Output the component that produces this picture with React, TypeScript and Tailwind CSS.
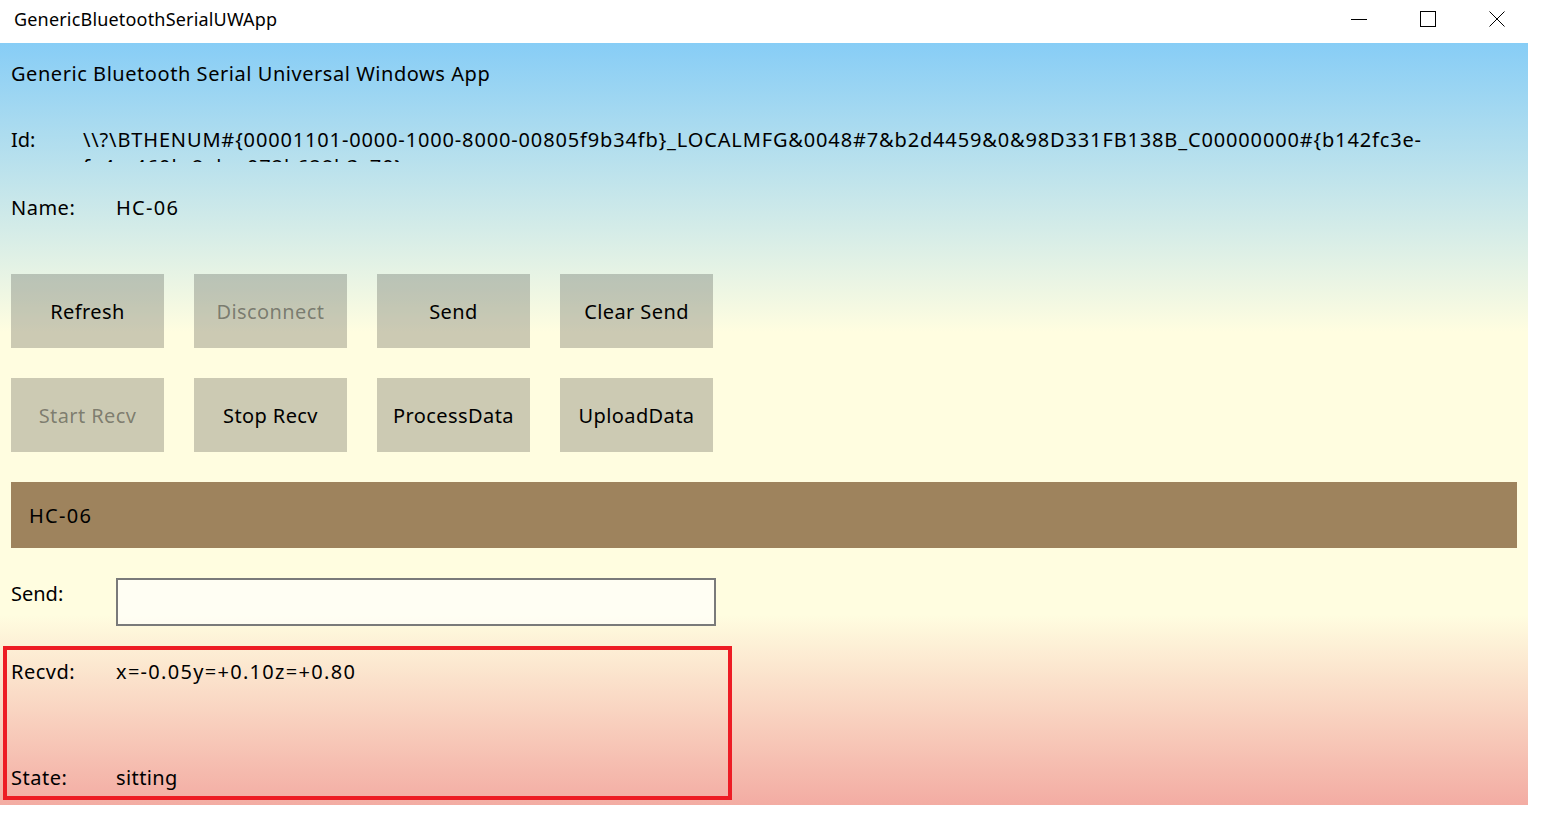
import React from "react";

const font = { fontFamily: '"Noto Sans", "Open Sans", sans-serif' };

function Btn({ label, disabled }: { label: string; disabled?: boolean }) {
  return (
    <div
      className={
        "w-[153px] h-[74px] bg-black/20 flex items-center justify-center text-[20px] tracking-[0.4px] " +
        (disabled ? "text-black/40" : "text-black")
      }
    >
      {label}
    </div>
  );
}

export default function App() {
  const id =
    "\\\\?\\BTHENUM#{00001101-0000-1000-8000-00805f9b34fb}_LOCALMFG&0048#7&b2d4459&0&98D331FB138B_C00000000#{b142fc3e-fa4e-460b-8abc-072b628b3c70}";

  return (
    <div className="w-[1541px] h-[824px] bg-white text-black" style={font}>
      {/* title bar */}
      <div className="h-[43px] w-[1541px] flex justify-between">
        <div className="pl-[14px] pt-[8px] text-[18px] leading-[22px] tracking-[0.18px]">GenericBluetoothSerialUWApp</div>
        <div className="flex items-start pt-[11px] mr-[10px]">
          <div className="w-[69px] flex justify-center">
            <svg width="16" height="16" viewBox="0 0 16 16">
              <path d="M0 8.5H16" stroke="#000" strokeWidth="1" />
            </svg>
          </div>
          <div className="w-[69px] flex justify-center">
            <svg width="16" height="16" viewBox="0 0 16 16">
              <rect x="0.5" y="0.5" width="15" height="15" fill="none" stroke="#000" strokeWidth="1" />
            </svg>
          </div>
          <div className="w-[69px] flex justify-center">
            <svg width="16" height="16" viewBox="0 0 16 16">
              <path d="M0.5 0.5L15.5 15.5M15.5 0.5L0.5 15.5" stroke="#000" strokeWidth="1" />
            </svg>
          </div>
        </div>
      </div>

      {/* app body */}
      <div className="w-[1528px] h-[762px] pl-[11px] flex flex-col bg-[linear-gradient(to_bottom,#87cdf6_0%,#fffde0_38%,#fffde0_75%,#f3aca3_100%)] text-[20px] leading-[27px]">
        <div className="mt-[17px] h-[27px] tracking-[0.55px]">Generic Bluetooth Serial Universal Windows App</div>

        <div className="mt-[39px] h-[36px] overflow-hidden flex">
          <div className="w-[72px] shrink-0">Id:</div>
          <div className="w-[1370px] tracking-[0.85px]">{id}</div>
        </div>

        <div className="mt-[32px] h-[27px] flex">
          <div className="w-[105px] shrink-0 tracking-[0.5px]">Name:</div>
          <div className="tracking-[1.3px]">HC-06</div>
        </div>

        <div className="mt-[53px] grid grid-cols-[repeat(4,153px)] gap-[30px]">
          <Btn label="Refresh" />
          <Btn label="Disconnect" disabled />
          <Btn label="Send" />
          <Btn label="Clear Send" />
          <Btn label="Start Recv" disabled />
          <Btn label="Stop Recv" />
          <Btn label="ProcessData" />
          <Btn label="UploadData" />
        </div>

        <div className="mt-[30px] w-[1506px] h-[66px] bg-[#9e835d] flex items-center pl-[18px] tracking-[1.3px]">HC-06</div>

        <div className="mt-[30px] h-[48px] flex">
          <div className="w-[105px] shrink-0 pt-[2px]">Send:</div>
          <div className="w-[600px] h-[48px] border-2 border-[#7a7a7a] bg-white/60" />
        </div>

        <div className="mt-[20px] -ml-[8px] w-[729px] h-[154px] border-4 border-[#ed1c24] pl-[4px] pt-[8px] pb-[5px] flex flex-col justify-between">
          <div className="flex">
            <div className="w-[105px] shrink-0 tracking-[0.5px]">Recvd:</div>
            <div className="tracking-[1.3px]">x=-0.05y=+0.10z=+0.80</div>
          </div>
          <div className="flex">
            <div className="w-[105px] shrink-0 tracking-[0.5px]">State:</div>
            <div className="tracking-[0.4px]">sitting</div>
          </div>
        </div>
      </div>
    </div>
  );
}
